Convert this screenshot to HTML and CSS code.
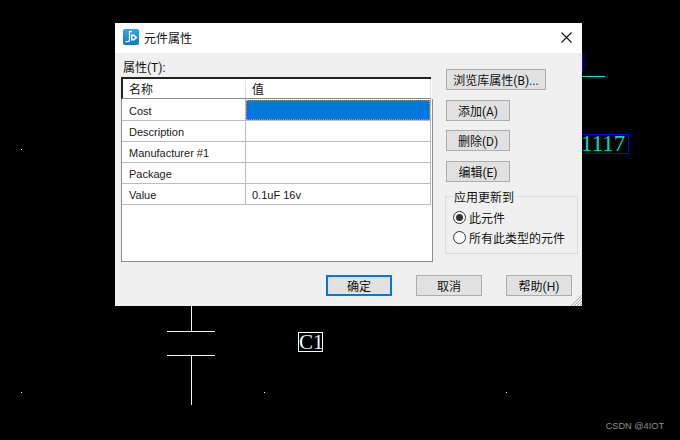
FILE: index.html
```html
<!DOCTYPE html>
<html lang="en">
<head>
<meta charset="UTF-8">
<title>元件属性</title>
<link rel="stylesheet" href="styles.css">
</head>
<body>

  <div class="canvas">
    <svg class="schematic" width="680" height="440" viewBox="0 0 680 440">
      <path class="wire-blue" d="M582.5 53v19"/>
      <path class="wire-cyan" d="M582 76.500h23"/>
      <path class="wire-blue" d="M582 134.500h46.500v19H582"/>
      <path class="wire-white" d="M191.500 306v25M167 331.500h48M167 355.500h48M191.500 355v50"/>
      <rect class="dot" x="21" y="149" width="1" height="1"/>
      <rect class="dot" x="21" y="392" width="1" height="1"/>
      <rect class="dot" x="264" y="392" width="1" height="1"/>
      <rect class="dot" x="506" y="392" width="1" height="1"/>
    </svg>
    <span class="part-value">1117</span>
    <span class="part-name">C1</span>
    <span class="watermark">CSDN @4IOT</span>
  </div>

  <div class="dialog">
    <div class="titlebar">
      <svg class="app-icon" width="16" height="16" viewBox="0 0 16 16">
        <defs>
          <linearGradient id="iconfill" x1="0" y1="0" x2="0" y2="1">
            <stop offset="0" stop-color="#35a9e6"/>
            <stop offset="1" stop-color="#0f78c4"/>
          </linearGradient>
        </defs>
        <rect width="16" height="16" rx="2" fill="url(#iconfill)"/>
        <path d="M9 2.500H6.500v8.500a1.700 1.700 0 0 1-1.700 1.700H2.500" fill="none" stroke="#fff" stroke-width="1.300"/>
        <path d="M8 5.500h3l3.500 3-3.500 3H8z" fill="#fff"/>
        <path d="M9.500 7.200h1.300l1.300 1.300-1.300 1.300H9.500z" fill="#1a8fd6"/>
      </svg>
      <span class="title">元件属性</span>
      <svg class="close" width="11" height="11" viewBox="0 0 11 11">
        <path d="M.5.500l10 10M10.500.500l-10 10" stroke="#111" stroke-width="1.100" fill="none"/>
      </svg>
    </div>

    <div class="content">
      <div class="main">
        <div class="left">
          <div class="list-label">属性(T):</div>
          <div class="list">
            <div class="row head"><div class="name">名称</div><div class="val">值</div></div>
            <div class="list-body">
              <div class="row"><div class="name">Cost</div><div class="val"><div class="selected"></div></div></div>
              <div class="row"><div class="name">Description</div><div class="val"></div></div>
              <div class="row"><div class="name">Manufacturer #1</div><div class="val"></div></div>
              <div class="row"><div class="name">Package</div><div class="val"></div></div>
              <div class="row"><div class="name">Value</div><div class="val">0.1uF 16v</div></div>
            </div>
          </div>
        </div>

        <div class="right">
          <button class="btn wide">浏览库属性(B)...</button>
          <button class="btn small tight">添加(A)</button>
          <button class="btn small">删除(D)</button>
          <button class="btn small">编辑(E)</button>
          <fieldset class="group">
            <legend>应用更新到</legend>
            <label class="radio"><span class="circle on"></span>此元件</label>
            <label class="radio"><span class="circle"></span>所有此类型的元件</label>
          </fieldset>
        </div>
      </div>

      <div class="footer">
        <button class="btn action default">确定</button>
        <button class="btn action">取消</button>
        <button class="btn action">帮助(H)</button>
      </div>
    </div>

    <svg class="grip" width="12" height="12" viewBox="0 0 12 12">
      <path d="M12 1L1 12M12 4L4 12M12 7L7 12M12 10l-2 2" stroke="#a8a8a8" fill="none"/>
    </svg>
  </div>

</body>
</html>
```

FILE: styles.css
```css
html, body { margin: 0; padding: 0; }
body { width: 680px; height: 440px; background: #000; overflow: hidden; position: relative; font-family: Roboto, "Noto Sans CJK SC", sans-serif; font-size: 12px; color: #111; }

/* schematic behind the dialog */
.canvas { position: absolute; left: 0; top: 0; width: 680px; height: 440px; }
.schematic { display: block; }
.wire-blue { stroke: #0000ff; fill: none; }
.wire-cyan { stroke: #00e0e0; fill: none; }
.wire-white { stroke: #f4f4f4; fill: none; }
.dot { fill: #fff; }
.part-value { position: absolute; left: 581px; top: 132px; font-family: "Liberation Serif", serif; font-size: 23px; line-height: 24px; color: #00d8c0; }
.part-name { position: absolute; left: 298px; top: 332px; width: 23px; height: 18px; border: 1px solid #fff; font-family: "Liberation Serif", serif; font-size: 21px; line-height: 19px; color: #e8fbff; text-align: center; }
.watermark { position: absolute; right: 16px; top: 419px; font-family: "Liberation Sans", sans-serif; font-size: 9.200px; line-height: 14px; color: #8f8f8f; }

/* dialog window */
.dialog { position: absolute; left: 115px; top: 23px; width: 467px; height: 283px; background: #f0f0f0; display: flex; flex-direction: column; }
.titlebar { height: 30px; flex: none; box-sizing: border-box; background: #fff; display: flex; align-items: center; padding: 0 10px 2px 8px; }
.app-icon { flex: none; margin-right: 5px; }
.title { flex: 1; font-size: 12px; color: #111; }
.close { flex: none; }

.content { flex: 1; display: flex; flex-direction: column; padding: 0 4px 10px 6px; }
.main { display: flex; flex: 1; }
.left { width: 312px; margin-right: 12px; }
.list-label { height: 24px; line-height: 14px; padding: 8px 0 0 2px; box-sizing: border-box; }

.list { width: 312px; height: 185px; }
.list-body { height: 163px; box-sizing: border-box; background: #fff; border: 1px solid #8c8c8c; border-top: 0; padding-right: 1px; }
.row { display: flex; height: 21px; box-sizing: border-box; border-bottom: 1px solid #bdbdbd; line-height: 22px; font-family: "Liberation Sans", sans-serif; font-size: 11px; }
.row:first-child { height: 22px; line-height: 24px; }
.name { width: 124px; box-sizing: border-box; padding-left: 7px; border-right: 1px solid #bdbdbd; color: #1a1a1a; }
.val { flex: 1; box-sizing: border-box; padding-left: 6px; position: relative; border-right: 1px solid #bdbdbd; }
.row.head { width: 310px; height: 22px; background: #fff; border-top: 2px solid #222; border-left: 2px solid #222; border-bottom: 1px solid #8c8c8c; font-family: "Noto Sans CJK SC", sans-serif; font-size: 12px; line-height: 19px; box-shadow: 2px 1px 0 -1px #fff; }
.row.head .name { width: 123px; padding-left: 6px; border-right-color: #e2e2e2; }
.row.head .val { border-right-color: #e2e2e2; }
.selected { position: absolute; left: 0; top: 1px; right: 0; bottom: 0; background: #0078d7; border: 1px dotted #e08a20; }

.right { width: 133px; padding-top: 16px; }
.btn { display: block; box-sizing: border-box; padding: 0; margin: 0 0 10px 1px; height: 21px; background: #e1e1e1; border: 1px solid #adadad; font-family: inherit; font-size: 12px; color: #111; }
.btn.wide { width: 100px; }
.btn.small { width: 64px; }
.btn.tight { margin-bottom: 9px; }
.group { margin: -4px 0 0; padding: 2px 0 0 7px; width: 133px; height: 66px; box-sizing: border-box; border: 1px solid #dcdcdc; }
.group legend { padding: 3px 1px 0; font-size: 12px; line-height: 14px; }
.radio { display: flex; align-items: center; height: 20px; font-size: 12px; }
.circle { width: 11px; height: 11px; border: 1px solid #333; border-radius: 50%; background: #fff; margin-right: 3px; position: relative; flex: none; }
.circle.on::after { content: ""; position: absolute; left: 2px; top: 2px; width: 7px; height: 7px; border-radius: 50%; background: #333; }

.footer { display: flex; justify-content: flex-end; gap: 24px; padding-right: 6px; }
.footer .btn { margin: 0; }
.btn.action { width: 66px; }
.btn.default { border: 2px solid #0078d7; }
.grip { position: absolute; right: 0; bottom: 0; }
```
